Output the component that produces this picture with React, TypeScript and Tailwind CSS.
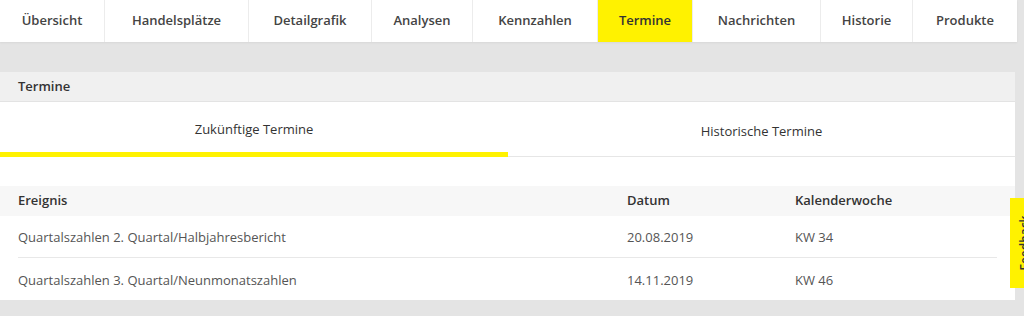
const tabs = [
  { label: "Übersicht", w: "w-[105px]" },
  { label: "Handelsplätze", w: "w-[144px]" },
  { label: "Detailgrafik", w: "w-[123px]" },
  { label: "Analysen", w: "w-[101px]" },
  { label: "Kennzahlen", w: "w-[125px]" },
  { label: "Termine", w: "w-[95px]", active: true },
  { label: "Nachrichten", w: "w-[128px]" },
  { label: "Historie", w: "w-[92px]" },
  { label: "Produkte", w: "w-[104px]" },
];

const termine = [
  { event: "Quartalszahlen 2. Quartal/Halbjahresbericht", date: "20.08.2019", kw: "KW 34" },
  { event: "Quartalszahlen 3. Quartal/Neunmonatszahlen", date: "14.11.2019", kw: "KW 46" },
];

export default function App() {
  return (
    <div className="relative min-h-[316px] w-[1024px] overflow-hidden bg-[#e4e4e4] font-['Open_Sans',sans-serif] text-[13px]">
      {/* top navigation */}
      <nav className="flex h-[42px] w-[1017px] bg-white shadow-[0_1px_2px_rgba(0,0,0,0.06)]">
        {tabs.map((t) => (
          <div
            key={t.label}
            className={`${t.w} flex items-center justify-center border-r border-[#ececec] text-[13px] font-semibold last:border-r-0 ${
              t.active ? "bg-[#fff200] text-[#333]" : "text-[#444]"
            }`}
          >
            {t.label}
          </div>
        ))}
      </nav>

      {/* termine panel */}
      <section className="mt-[30px] w-[1015px] bg-white">
        <div className="flex h-[30px] items-center border-b border-[#e3e3e3] bg-[#f0f0f0] px-[18px] font-semibold text-[#333]">
          Termine
        </div>

        <div className="flex h-[55px]">
          <div className="flex w-[508px] flex-col">
            <div className="flex flex-1 items-center justify-center pt-[6px] font-medium text-[#333]">Zukünftige Termine</div>
            <div className="h-[5px] bg-[#fff200]" />
          </div>
          <div className="flex flex-1 flex-col border-b border-[#e6e6e6]">
            <div className="flex flex-1 items-center justify-center pt-[6px] font-medium text-[#333]">Historische Termine</div>
          </div>
        </div>

        <div className="pt-[29px]">
          <div className="flex h-[30px] items-center bg-[#f7f7f7] px-[18px] font-semibold text-[#333]">
            <div className="w-[609px]">Ereignis</div>
            <div className="w-[168px]">Datum</div>
            <div>Kalenderwoche</div>
          </div>
          <div className="px-[18px]">
            {termine.map((r, i) => (
              <div
                key={r.event}
                className={`flex h-[42px] items-center pt-[3px] text-[#555] ${i === 0 ? "border-b border-[#e8e8e8]" : ""}`}
              >
                <div className="w-[609px]">{r.event}</div>
                <div className="w-[168px]">{r.date}</div>
                <div>{r.kw}</div>
              </div>
            ))}
          </div>
        </div>
      </section>

      {/* feedback tab */}
      <div className="absolute left-[1010px] top-[198px] flex h-[90px] w-[30px] items-center justify-center bg-[#fff200]">
        <span className="-rotate-90 whitespace-nowrap text-[12px] font-semibold text-[#333]">Feedback</span>
      </div>
    </div>
  );
}
